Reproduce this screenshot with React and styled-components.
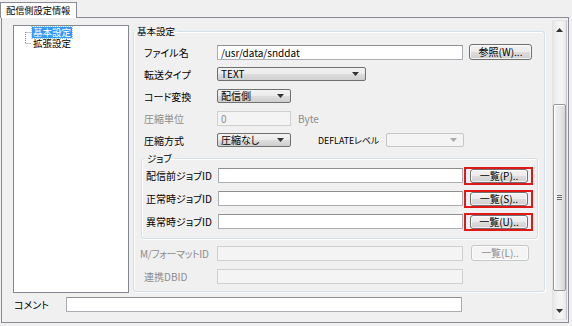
import React from "react"
import styled, { createGlobalStyle } from "styled-components"

const GlobalStyle = createGlobalStyle`
  body {
    margin: 0;
    background: #f0f0f0;
    font-family: "Noto Sans CJK JP", "Liberation Sans", sans-serif;
    font-size: 10px;
    font-feature-settings: "palt";
    color: #000;
  }
`

const Window = styled.div`
  width: 572px;
  height: 326px;
  box-sizing: border-box;
  padding: 2px 3px 3px 1px;
  display: flex;
  flex-direction: column;
  background: #f0f0f0;
`

const TabStrip = styled.div`
  display: flex;
  height: 15px;
`

const Tab = styled.div`
  position: relative;
  z-index: 1;
  height: 16px;
  box-sizing: border-box;
  margin-left: -1px;
  padding: 0 6px 0 5px;
  border: 1px solid #898c95;
  border-bottom: none;
  background: #fff;
  font-size: 9.2px;
  line-height: 15px;
`

const TabPage = styled.div`
  flex: 1;
  display: flex;
  min-height: 0;
  padding: 2px 1px 2px 0;
  border: 1px solid #898c95;
  background: #f0f0f0;
`

const ScrollView = styled.div`
  flex: 1;
  display: flex;
  flex-direction: column;
  padding: 5px 7px 0 11px;
  overflow: hidden;
`

const TopRow = styled.div`
  display: flex;
  gap: 4px;
  height: 268px;
`

const Tree = styled.div`
  width: 116px;
  flex-shrink: 0;
  box-sizing: border-box;
  padding: 1px 0 0 8px;
  border: 1px solid #828790;
  background: #fff;
`

const TreeItem = styled.div`
  display: flex;
  align-items: center;
  height: 11px;
`

const TreeText = styled.span`
  display: inline-block;
  height: 11px;
  line-height: 11px;
  padding: 0 1px;
  font-size: 9.5px;
  color: ${p => (p.selected ? "#fff" : "#000")};
  background: ${p => (p.selected ? "#3399ff" : "transparent")};
  outline: ${p => (p.selected ? "1px dotted #9ccaff" : "none")};
`

const GroupBox = styled.fieldset`
  flex: 1;
  min-width: 0;
  margin: ${p => p.margin || "1px 0"};
  padding: ${p => p.pad || "0 6px 6px"};
  border: 1px solid #d5dfe5;
  border-radius: 3px;
  box-shadow: inset 1px 1px 0 #fff, 1px 1px 0 #fff;
`

const Legend = styled.legend`
  margin-left: ${p => p.offset || 0}px;
  padding: 0 2px;
  font-size: 9.5px;
  line-height: ${p => p.lh || 10}px;
`

const Row = styled.div`
  display: flex;
  align-items: center;
  height: ${p => p.h || 22}px;
  margin-top: ${p => p.top || 0}px;
  padding-left: ${p => p.indent || 0}px;
`

const Label = styled.span`
  width: ${p => p.w}px;
  flex-shrink: 0;
  white-space: nowrap;
  letter-spacing: ${p => p.tight || 0}px;
  color: ${p => (p.disabled ? "#8d8d8d" : "#000")};
`

const Note = styled.span`
  width: ${p => (p.w ? `${p.w}px` : "auto")};
  flex-shrink: 0;
  margin-left: ${p => p.gap}px;
  white-space: nowrap;
  font-size: ${p => p.size || 10}px;
  color: ${p => (p.disabled ? "#8d8d8d" : "#000")};
`

const TextBox = styled.input`
  width: ${p => p.w}px;
  height: 15px;
  box-sizing: border-box;
  margin: 0;
  padding: 0 3px;
  border: 1px solid #abadb3;
  border-top-color: #8e8f8f;
  background: #fff;
  font: inherit;
  color: #000;
  outline: none;

  &:disabled {
    border-color: #cfcfcf;
    background: #f4f4f4;
    color: #8d8d8d;
  }
`

const Combo = styled.div`
  width: ${p => p.w}px;
  height: 14px;
  flex-shrink: 0;
  box-sizing: border-box;
  display: flex;
  align-items: center;
  justify-content: space-between;
  padding: 0 6px 0 3px;
  border: 1px solid ${p => (p.disabled ? "#c4c7ca" : "#707070")};
  border-radius: 2px;
  background: ${p =>
    p.disabled
      ? "#f4f4f4"
      : "linear-gradient(#f2f2f2 0%, #ebebeb 50%, #dddddd 51%, #cfcfcf 100%)"};
  line-height: 12px;
`

const Button = styled.button`
  width: ${p => p.w}px;
  height: ${p => p.h || 15}px;
  flex-shrink: 0;
  box-sizing: border-box;
  margin: 0 0 0 ${p => p.gap || 0}px;
  padding: 0;
  border: 1px solid ${p => (p.disabled ? "#c4c7ca" : "#707070")};
  border-radius: 3px;
  background: ${p =>
    p.disabled
      ? "#f4f4f4"
      : "linear-gradient(#f2f2f2 0%, #ebebeb 50%, #dddddd 51%, #cfcfcf 100%)"};
  box-shadow: inset 0 0 0 1px rgba(255, 255, 255, 0.7);
  font: inherit;
  line-height: 12px;
  color: ${p => (p.disabled ? "#8d8d8d" : "#000")};
`

const RedFrame = styled.span`
  display: inline-flex;
  margin-left: 1px;
  padding: 0 3px 0 4px;
  border: 2px solid #e01818;
`

const CommentRow = styled.div`
  display: flex;
  align-items: center;
  height: 15px;
  margin-top: 4px;
  padding-left: 1px;
`

const ScrollBar = styled.div`
  width: 13px;
  display: flex;
  flex-direction: column;
  border: 1px solid #e3e3e3;
  border-right-color: #c9c9c9;
  background: linear-gradient(90deg, #e6e6e6, #f4f4f4 40%, #f4f4f4 70%, #e6e6e6);
`

const ArrowButton = styled.div`
  height: 17px;
  display: flex;
  align-items: center;
  justify-content: center;
`

const Thumb = styled.div`
  height: 187px;
  margin-top: 66px;
  box-sizing: border-box;
  display: flex;
  align-items: center;
  justify-content: center;
  border: 1px solid #979797;
  border-radius: 2px;
  background: linear-gradient(90deg, #f3f3f3, #e9e9e9 50%, #d6d6d6);
  box-shadow: inset 1px 1px 0 #fff;
`

const Spacer = styled.div`
  flex: 1;
`

const Arrow = ({ up, disabled }) => (
  <svg width="7" height="4" viewBox="0 0 7 4">
    <path
      d={up ? "M0 4 L3.5 0 L7 4 Z" : "M0 0 L7 0 L3.5 4 Z"}
      fill={disabled ? "#aaaaaa" : "#333333"}
    />
  </svg>
)

const Grip = () => (
  <svg width="5" height="6" viewBox="0 0 5 6">
    <path d="M0 0.5 H5 M0 2.5 H5 M0 4.5 H5" stroke="#6f6f6f" strokeWidth="1" />
  </svg>
)

const TreeLine = ({ first }) => (
  <svg width="10" height="11" viewBox="0 0 10 11">
    <path
      d={first ? "M3.5 5 V11 M3.5 5.5 H9" : "M3.5 0 V5.5 M3.5 5.5 H9"}
      stroke="#8a8a8a"
      strokeWidth="1"
      strokeDasharray="1 1"
    />
  </svg>
)

const ListButton = ({ children, highlighted }) =>
  highlighted ? (
    <RedFrame>
      <Button w={58} h={14}>{children}</Button>
    </RedFrame>
  ) : (
    <Button w={58} h={16} gap={8} disabled>
      {children}
    </Button>
  )

const jobs = [
  { label: "配信前ジョブID", button: "一覧(P).." },
  { label: "正常時ジョブID", button: "一覧(S).." },
  { label: "異常時ジョブID", button: "一覧(U).." },
]

export default function App() {
  return (
    <Window>
      <GlobalStyle />
      <TabStrip>
        <Tab>配信側設定情報</Tab>
      </TabStrip>
      <TabPage>
        <ScrollView>
          <TopRow>
            <Tree>
              <TreeItem>
                <TreeLine first />
                <TreeText selected>基本設定</TreeText>
              </TreeItem>
              <TreeItem>
                <TreeLine />
                <TreeText>拡張設定</TreeText>
              </TreeItem>
            </Tree>
            <GroupBox>
              <Legend offset={-5}>基本設定</Legend>
              <Row indent={4} top={5}>
                <Label w={73}>ファイル名</Label>
                <TextBox w={246} readOnly defaultValue="/usr/data/snddat" />
                <Button w={63} h={16} gap={6}>参照(W)...</Button>
              </Row>
              <Row indent={4}>
                <Label w={73}>転送タイプ</Label>
                <Combo w={149}>
                  TEXT
                  <Arrow />
                </Combo>
              </Row>
              <Row indent={4}>
                <Label w={73}>コード変換</Label>
                <Combo w={74}>
                  配信側
                  <Arrow />
                </Combo>
              </Row>
              <Row indent={4}>
                <Label w={73} disabled>圧縮単位</Label>
                <TextBox w={74} disabled defaultValue="0" />
                <Note gap={7} disabled>Byte</Note>
              </Row>
              <Row indent={4}>
                <Label w={73}>圧縮方式</Label>
                <Combo w={74}>
                  圧縮なし
                  <Arrow />
                </Combo>
                <Note gap={27} w={68} size={8.8}>DEFLATEレベル</Note>
                <Combo w={78} disabled>
                  <span />
                  <Arrow disabled />
                </Combo>
              </Row>
              <GroupBox margin="1px 0 0 1px" pad="0 4px 5px">
                <Legend lh={12} offset={-1}>ジョブ</Legend>
                {jobs.map(job => (
                  <Row key={job.label} h={23}>
                    <Label w={72}>{job.label}</Label>
                    <TextBox w={246} readOnly />
                    <ListButton highlighted>{job.button}</ListButton>
                  </Row>
                ))}
              </GroupBox>
              <Row top={3}>
                <Label w={77} tight={-0.4} disabled>M/フォーマットID</Label>
                <TextBox w={246} disabled />
                <ListButton>一覧(L)..</ListButton>
              </Row>
              <Row indent={4} h={24}>
                <Label w={73} disabled>連携DBID</Label>
                <TextBox w={246} disabled />
              </Row>
            </GroupBox>
          </TopRow>
          <CommentRow>
            <Label w={52}>コメント</Label>
            <TextBox w={396} readOnly />
          </CommentRow>
        </ScrollView>
        <ScrollBar>
          <ArrowButton>
            <Arrow up />
          </ArrowButton>
          <Thumb>
            <Grip />
          </Thumb>
          <Spacer />
          <ArrowButton>
            <Arrow />
          </ArrowButton>
        </ScrollBar>
      </TabPage>
    </Window>
  )
}
